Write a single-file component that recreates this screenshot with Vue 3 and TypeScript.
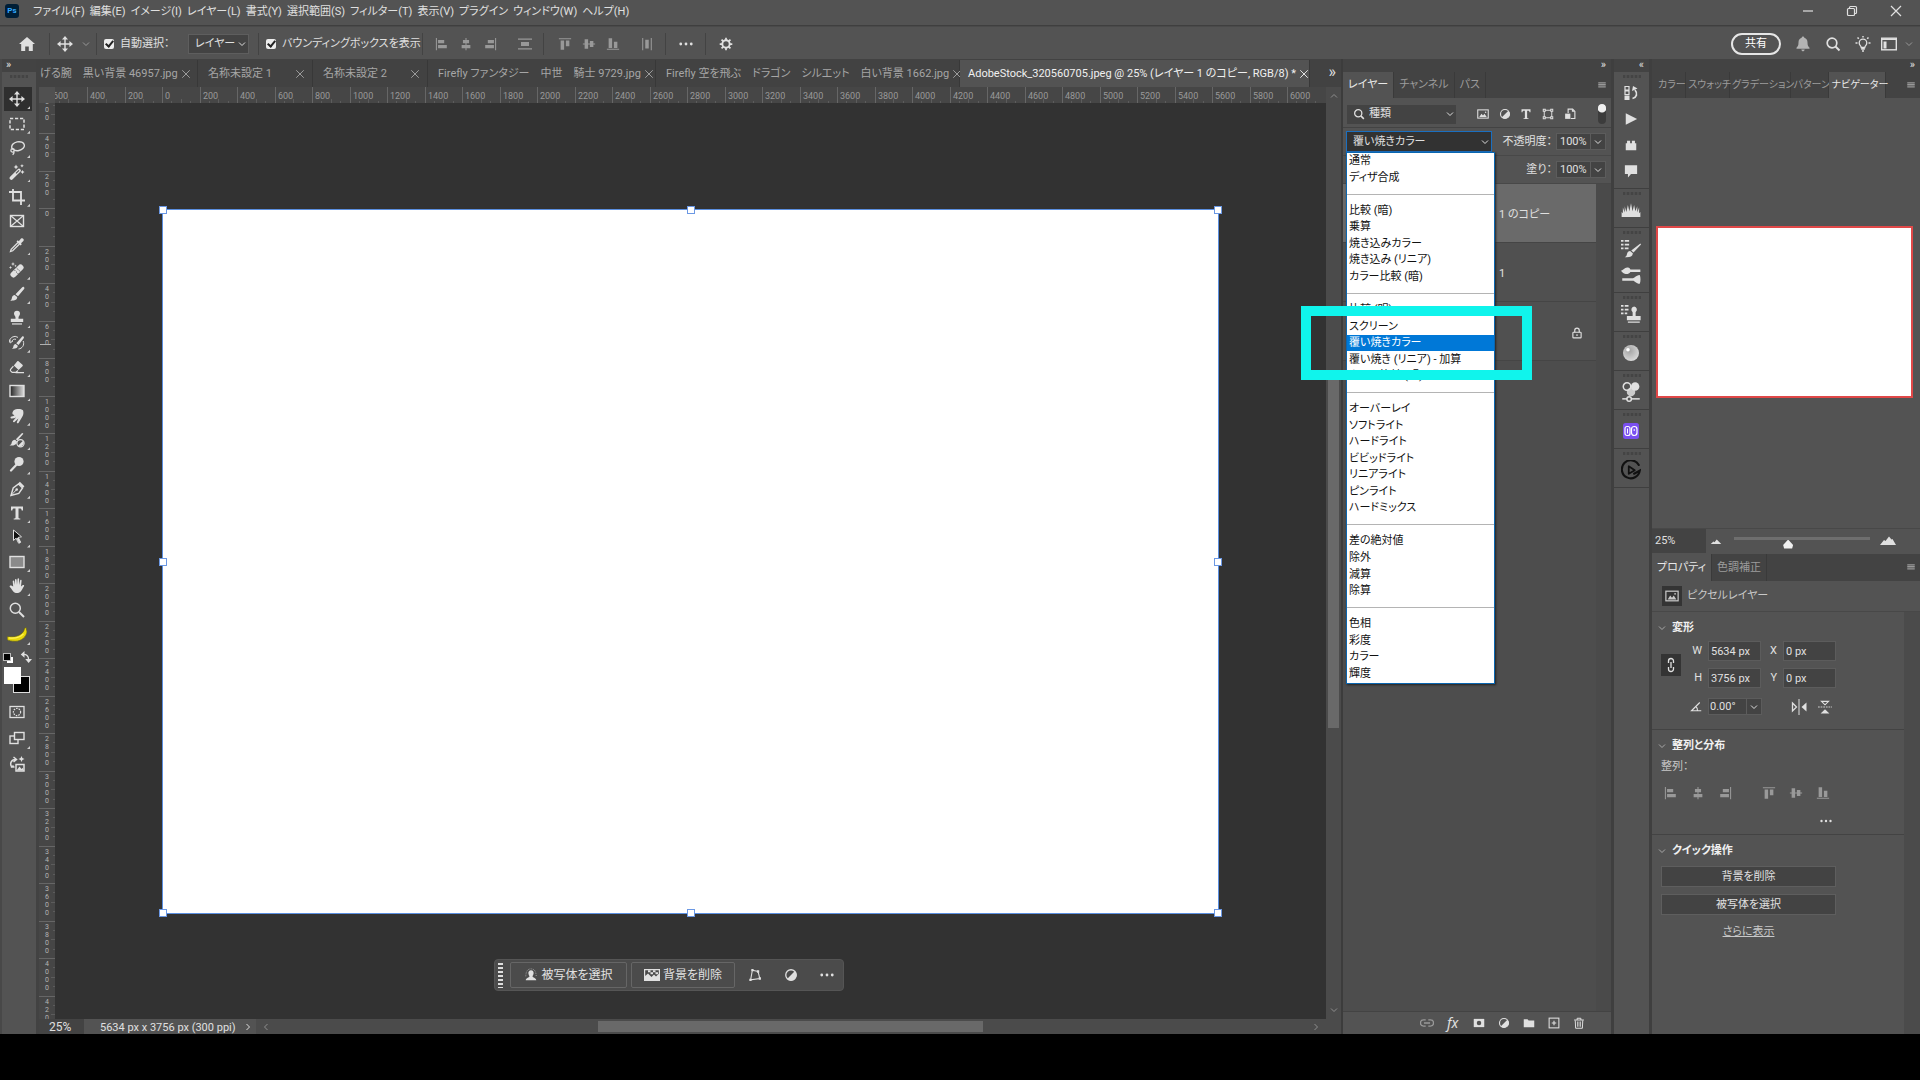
<script setup lang="ts">
import { ref } from 'vue'

const S = 'fill="none" stroke="currentColor"'

const icons: Record<string, string> = {
  move: `<path d="M8 2v12M2 8h12" ${S} stroke-width="1.4"/><path d="M8 0l3 3.6H5zM8 16l3-3.6H5zM0 8l3.6-3v6zM16 8l-3.6-3v6z"/>`,
  marquee: `<rect x="1" y="2.5" width="14" height="11" ${S} stroke-width="1.5" stroke-dasharray="3.2 1.8"/>`,
  lasso: `<ellipse cx="9" cy="6.2" rx="6.4" ry="4.4" ${S} stroke-width="1.4" transform="rotate(-12 9 6)"/><circle cx="3.6" cy="10.4" r="1.7" ${S} stroke-width="1.2"/><path d="M4.6 11.5c.8 1.2 0 2.4-1 3.2" ${S} stroke-width="1.2"/>`,
  wand: `<path d="M2.4 14L10 6.4" stroke="currentColor" stroke-width="3.6" stroke-linecap="round"/><path d="M7 9.400L10 6.400" stroke="#535353" stroke-width="1.300"/><path d="M7 .6l.8 1.600 1.600.8-1.600.8L7 5.400l-.8-1.600L4.600 3l1.600-.8zM13 0l.6 1.200 1.200.6-1.200.6L13 3.600l-.6-1.200-1.200-.6 1.200-.6zM13.500 6l.7 1.300 1.300.7-1.300.7-.7 1.300-.7-1.300-1.300-.7 1.300-.7z"/>`,
  crop: `<path d="M4 0v11.500h8M0 3h12v8.500M12 11.500V16M12.500 11.500H16" ${S} stroke-width="1.800"/>`,
  frame: `<rect x="1.500" y="2.500" width="13" height="11" ${S} stroke-width="1.400"/><path d="M1.500 2.500l13 11M14.500 2.500l-13 11" ${S} stroke-width="1.200"/>`,
  dropper: `<path d="M9 5.500L2.200 12.300 1.500 14.500l2.200-.7L10.500 7" ${S} stroke-width="1.300"/><path d="M7.500 4.500l1.300-1.200 1 .9L12 1.600c1.500-1.400 3.700.7 2.400 2.300L12 6.300l.8 1-1.300 1.200z"/>`,
  heal: `<path d="M4.500 12.500l7-7" stroke="currentColor" stroke-width="6" stroke-linecap="round"/><path d="M5.600 8.200l3.600 3.600M7.700 6.100l3.600 3.600" stroke="#535353" stroke-width="1" stroke-dasharray="1.200 .8"/><path d="M4 0l.6 1.400L6 2l-1.400.6L4 4l-.6-1.400L2 2l1.400-.6zM1.500 4l.5 1 1 .5-1 .5-.5 1L1 6l-1-.5L1 5zM6.500 2.500l.4 1 1 .4-1 .4-.4 1-.4-1-1-.4 1-.4z"/>`,
  brush: `<path d="M15 1.200c.8.700.4 1.500-.1 2.100L9 10.200 6.500 8.200 13 1.500c.600-.6 1.300-.9 2-.3zM5.700 9l2.500 2.100c.1 2.500-2 3.900-7.200 3.600 1.600-.8 1.600-1.600 1.900-3C3.300 10 4.400 9 5.700 9z"/>`,
  stamp: `<path d="M8 .8a3 3 0 0 1 3 3c0 1.600-1.500 2.200-1.500 3.700v1.300h4.700V12H1.800V8.800h4.700V7.500C6.500 6 5 5.400 5 3.800a3 3 0 0 1 3-3z"/><path d="M3 13.200h10v1.500H3z" opacity=".8"/>`,
  history: `<path d="M14.500 1.500c.8.700.4 1.300 0 1.900L9.500 10 7.300 8.200 13 1.700c.500-.5 1-.6 1.500-.2zM6.600 8.900l2.200 1.900c0 2.200-1.800 3.200-6 3 1.300-.8 1.400-1.300 1.600-2.500.2-1.500 1.100-2.400 2.200-2.400z"/><path d="M1 7a5 4.500 0 0 1 8-4.600M3 6.500a3 2.500 0 0 1 4-2.200M0 4.500L1.200 8 4 5.800M14.200 6c1.600 4-1 7.600-4.700 8" ${S}/>`,
  eraser: `<path d="M9.500 2.200l4 3.600c.5.500.5 1 0 1.500L9.600 11 4.800 6.600l3.500-4.300c.4-.4.800-.4 1.200-.1z"/><path d="M4.400 7.200L1.600 10.400c-.4.500-.4 1 0 1.500l1.600 1.500h3.500L9 11.500M6.500 13.700H15" ${S} stroke-width="1.200"/>`,
  gradient: `<defs><linearGradient id="tool-gradient"><stop offset="0" stop-color="#222"/><stop offset="1" stop-color="#ddd"/></linearGradient></defs><rect x="1" y="2.500" width="14" height="11" fill="url(#tool-gradient)" stroke="currentColor" stroke-width="1.400"/>`,
  smudge: `<path d="M4.500 2.500C7 .8 11.500.5 14 2.200c.8 2.300.6 5-1.300 7.500L9.500 15c-.8.700-2 .200-1.600-1l1.500-3.600L5.500 14c-1 .6-2-.3-1.300-1.300L7 9.500c-1 .5-2.500 1-4.500.9-1.300-.2-1.400-1.800 0-2 1.600-.2 2.500-.7 3-1.500-2 .2-3-1.800-1-4.400z"/>`,
  mixer: `<path d="M13.500 1l.9.700L8.500 8.600 6.800 7.200 12.800 1.200zM6.200 7.800L8 9.400c0 2.600-2.300 4.400-7.500 4.200 1.800-1 1.900-1.600 2.200-3C3 9 4.800 7.600 6.200 7.800z"/><circle cx="11.500" cy="11.300" r="3.600" ${S} stroke-width="1.200"/><path d="M14 8.800a3.600 3.600 0 0 1-5 5z"/>`,
  dodge: `<circle cx="10" cy="5.500" r="4.600"/><path d="M7.200 9L2 14.500" stroke="currentColor" stroke-width="2.200" stroke-linecap="round"/>`,
  pen: `<path d="M2 14.500L4.200 7 9.500 3l4 4-3.700 5.500z" ${S} stroke-width="1.400"/><path d="M2 14.500L7.200 9" ${S}/><circle cx="7.700" cy="8.500" r="1.300"/><path d="M9.300 2.300l1.600-1.500 4.500 4.500-1.500 1.600z"/>`,
  type: `<path d="M2 1.500h12v4h-1.300c-.2-1.500-.7-2-2-2H9.500v9c0 .800.4 1.100 1.800 1.100v1H4.700v-1c1.400 0 1.800-.3 1.800-1.100v-9H5.300c-1.300 0-1.800.5-2 2H2z"/>`,
  arrow: `<path d="M4.500 1v10.500l2.600-2.300 2.500 5 2-1-2.400-4.800 3.300-.6z" fill="#111" stroke="currentColor" stroke-width="1"/><path d="M8.500 9l2.500 5" stroke="currentColor" stroke-width="2"/>`,
  rect: `<rect x="1" y="2.500" width="14" height="11" fill="#8a8a8a" stroke="currentColor" stroke-width="1.400"/>`,
  hand: `<path d="M4.200 8.500L3.700 3.300c0-1 1.300-1.200 1.500-.2L6 7V1.700c0-1 1.500-1 1.600 0L8 6.800 8.500 1c.1-1 1.500-1 1.600 0v6l1-4.600c.3-.9 1.600-.6 1.500.3L12 8.500l1.500-1.300c1-.7 2.200.1 1.500 1-1.500 1.800-2 4-3.500 5.600-1.700 1.600-5.500 1.600-7 0C3 12 2.300 10.300.8 9 .2 8 1.200 7.200 2.300 7.600z"/>`,
  zoom: `<circle cx="6.300" cy="6.300" r="5" ${S} stroke-width="1.500"/><path d="M10 10l5 5" stroke="currentColor" stroke-width="2"/>`,
  search: `<circle cx="7" cy="7" r="4.800" ${S} stroke-width="1.700"/><path d="M10.500 10.500l4 4" stroke="currentColor" stroke-width="2"/>`,
  banana: `<path d="M14 2.500l1.300-.5.7 3.500c-.5 4-4.500 7.500-9.500 7.500-3 0-5-.5-6.300-1.300V9.200c4.500.5 9 0 11.800-2.700C13.500 5.200 13.800 4 14 2.500z" fill="#e8d80a" stroke="#5c5a20" stroke-width=".5"/><path d="M1.500 10.300c4.500.6 9-.3 11.700-3.200" fill="none" stroke="#fff25a"/>`,
  mask: `<rect x="1" y="2.500" width="14" height="11" ${S} stroke-width="1.300"/><circle cx="8" cy="8" r="3.600" ${S} stroke-width="1.200" stroke-dasharray="1.600 1"/>`,
  screens: `<rect x="1" y="6" width="8" height="7.500" ${S} stroke-width="1.400"/><rect x="5.500" y="2.500" width="9.500" height="7" fill="#535353" stroke="currentColor" stroke-width="1.400"/>`,
  generate: `<path d="M5.500 11H2.800C.5 8 2 3.500 6.500 3.500M4.500 1l3 2.400-3 2.600M2 11.500l2.500-2M7 8.500h8v6.500H7z" ${S} stroke-width="1.500"/><path d="M12.500 0l.9 2.100 2.100.9-2.100.9-.9 2.100-.9-2.100L9.500 3l2.100-.9zM7.500 14.500l3-4 2 2.500 1-1.200 1.500 2.700z"/>`,
  home: `<path d="M8 1l8 7h-2.200v7H9.800v-4.500H6.200V15H2.200V8H0z"/>`,
  chevron: `<path d="M4 6l4 4 4-4" ${S} stroke-width="1.300"/>`,
  gear: `<circle cx="8" cy="8" r="4.200" ${S} stroke-width="2.200"/><path d="M8 .8v3M8 12.200v3M.8 8h3M12.200 8h3M2.900 2.900L5 5M11 11l2.100 2.100M13.100 2.900L11 5M5 11l-2.100 2.100" stroke="currentColor" stroke-width="2"/>`,
  dots: `<circle cx="2" cy="8" r="1.600"/><circle cx="8" cy="8" r="1.600"/><circle cx="14" cy="8" r="1.600"/>`,
  alLeft: `<path d="M1 1h1.200v14H1zM3.500 3.500h7v3.500h-7zM3.500 9h10v3.800h-10z"/>`,
  alCenter: `<path d="M7.400 1h1.200v14H7.400zM4.500 3.500h7v3.500h-7zM3 9h10v3.800H3z"/>`,
  alRight: `<path d="M13.800 1H15v14h-1.200zM5.500 3.500h7v3.500h-7zM2.500 9h10v3.800h-10z"/>`,
  distV: `<path d="M1 2.500h14v1.200H1zM4 6h8v4H4zM1 12.300h14v1.200H1z"/>`,
  alTop: `<path d="M1 1.500h14v1.200H1zM3 4h4v10.500H3zM9 4h4v6.500H9z"/>`,
  alMid: `<path d="M1 7.400h14v1.200H1zM3 2.500h4v11H3zM9 4.500h4v7H9z"/>`,
  alBottom: `<path d="M1 13.500h14v1.200H1zM3 1.500h4v11H3zM9 5.500h4v7H9z"/>`,
  distH: `<path d="M2.500 1h1.200v14H2.500zM6 3h4v10H6zM12.300 1h1.200v14h-1.200z"/>`,
  bell: `<path d="M8 .5c.8 0 1.300.6 1.300 1.300 2.200.6 3.200 2.400 3.200 4.700 0 3 .7 4 2 5.200v1h-13v-1c1.300-1.200 2-2.200 2-5.200 0-2.300 1-4.100 3.200-4.700C6.700 1.100 7.200.5 8 .5zM6.300 13.500h3.400c-.3 2.400-3.100 2.400-3.400 0z"/>`,
  bulb: `<path d="M6.200 11.500c0-1.500-2-2.300-2-4.600a3.800 3.800 0 0 1 7.600 0c0 2.300-2 3.100-2 4.600zM6.200 13h3.600M7 15h2" ${S} stroke-width="1.300"/><path d="M8 0v1.600M.5 7h2M13.500 7h2M2.500 1.500l1.300 1.300M13.500 1.500l-1.300 1.300" ${S} stroke-width="1.500"/>`,
  workspace: `<rect x=".7" y="2.200" width="14.600" height="11.600" ${S} stroke-width="1.400"/><path d="M1 2.500h14v1.500H1zM2.500 5.500h3v7h-3z"/>`,
  min: `<path d="M3 8h10" ${S} stroke-width="1.200"/>`,
  restore: `<rect x="3.500" y="5.500" width="7" height="7" rx="1" ${S} stroke-width="1.200"/><path d="M5.500 5.500v-1c0-.6.4-1 1-1h5c.6 0 1 .4 1 1v5c0 .600-.4 1-1 1h-1" ${S} stroke-width="1.200"/>`,
  close: `<path d="M3 3l10 10M13 3L3 13" ${S} stroke-width="1.200"/>`,
  menu: `<path d="M2 3.500h12v2H2zM2 6.500h12v1.700H2zM2 9.200h12v1.700H2zM2 11.900h12v1H2z"/>`,
  picture: `<rect x="1" y="2.500" width="14" height="11" ${S} stroke-width="1.400"/><path d="M3 12l3-4.500L8 10l2-2.500L13 12z"/><circle cx="11.500" cy="5.500" r="1"/>`,
  adjust: `<circle cx="8" cy="8" r="6" ${S} stroke-width="1.500"/><path d="M12.500 3.500a6.300 6.300 0 0 1-9 9z"/>`,
  shape: `<path d="M3 3h10v10H3z" ${S} stroke-width="1.300"/><path d="M1 1h4v4H1zM11 1h4v4h-4zM1 11h4v4H1zM11 11h4v4h-4z"/><path d="M2.300 2.300h1.400v1.400H2.300zM12.300 2.300h1.400v1.400h-1.400zM2.300 12.300h1.400v1.400H2.300zM12.300 12.300h1.400v1.400h-1.400z" fill="#535353"/>`,
  smart: `<path d="M5.500 6.500v-5h6l3 3V14H9" ${S} stroke-width="1.500"/><path d="M1.500 7.500h7v7h-7z"/><path d="M10.500 1v4h4z"/>`,
  lock: `<rect x="2.500" y="7" width="11" height="7.500" rx="1" ${S} stroke-width="1.500"/><path d="M5 7V4.500a3 3 0 0 1 6 0V7M8 9.500v2.500" ${S} stroke-width="1.600"/>`,
  link: `<path d="M6.500 4.500H4a3.500 3.500 0 0 0 0 7h2.500M9.500 4.500H12a3.500 3.500 0 0 1 0 7H9.500M4.500 8h7" ${S} stroke-width="1.500"/>`,
  chain: `<path d="M5.500 6V4a2.500 2.500 0 0 1 5 0v2M5.500 10v2a2.500 2.500 0 0 0 5 0v-2M8 5v6" ${S} stroke-width="1.300"/>`,
  maskFill: `<path d="M1 2.500h14v11H1z"/><circle cx="8" cy="8" r="3" fill="#535353"/>`,
  folder: `<path d="M1 3h5l1.500 1.500H15v9H1z"/>`,
  plus: `<rect x="1.500" y="1.500" width="13" height="13" ${S} stroke-width="1.400"/><path d="M8 5v6M5 8h6" ${S} stroke-width="1.500"/>`,
  trash: `<path d="M1.500 4h13M5.500 4V1.700h5V4M3 4.500l.5 10.500h9L13 4.500" ${S} stroke-width="1.300"/><path d="M5.500 6h1v7h-1zM7.500 6h1v7h-1zM9.500 6h1v7h-1z"/>`,
  dHistory: `<path d="M2 1.500h4v3.500H2zM2 6h4v3.500H2z" ${S} stroke-width="1.200"/><path d="M1.500 10.500H6.500V15H1.500z"/><path d="M9.500 13.500c4-1 5.500-5 2.500-8.500" ${S} stroke-width="1.800"/><path d="M9 6l1-5 4.500 2.500z"/>`,
  play: `<path d="M2 1.500l13 6.500-13 6.500z"/>`,
  brick: `<path d="M2 6h1.500V3h3.500v3h2V3h3.500v3H14v8H2z"/>`,
  comment: `<path d="M1 1.500h14v10H8l-3.500 4v-4H1z"/>`,
  histogram: `<path d="M.5 13.500V9.500l1 1V6l1.500 4V5l1.300 4.500L5.500 4l1.200 5L8 2.500 9.200 9l1.300-5 1 5 1.500-4v5l1.500-4v4.500l1-1v4z"/>`,
  brushList: `<path d="M0 1.500h2M0 4.500h2M0 7.500h2M3 1.500h3.500M3 4.500h3.500M3 7.500h3" ${S} stroke-width="1.300"/><path d="M15.500 3.500l.5.900-6 6.300-1.800-1.600zM7.500 9.700l2 1.700c-.2 2.500-2 3.400-6.500 3.100 1.500-.7 1.500-1.300 1.800-2.500.3-1.300 1.300-2.400 2.700-2.300z"/>`,
  brushes: `<path d="M0 4.500C2 4 3 1.500 5.500 2c1.500.3 1.500 1 2 1.500h8v2h-8C6.500 7 5 7.500 3 7c-1.500-.4-2-1.600-3-2.500zM1 10.500h8.500c1.500 0 2-2 5.500-2.500.8 2 .8 5 0 7-3-.3-4-2.500-5.500-2.500H1z"/>`,
  stampList: `<path d="M0 1.500h2M0 4.500h2M0 7.500h2M3 1.500h3M3 4.500h3M3 7.500h2" ${S} stroke-width="1.300"/><path d="M10.500 2a2.500 2.500 0 0 1 1.200 4.500v3h4V13h-11V9.500h4.600v-3A2.500 2.500 0 0 1 10.500 2zM5.500 14h9.500v1H5.500z"/>`,
  sphere: `<defs><radialGradient id="dock-sphere" cx=".4" cy=".35" r=".7"><stop offset="0" stop-color="#a4a4a4"/><stop offset="1" stop-color="#dcdcdc"/></radialGradient></defs><circle cx="8" cy="8" r="8" fill="url(#dock-sphere)"/><circle cx="5" cy="4.800" r="1.800" fill="#fff"/>`,
  bubbles: `<circle cx="4.800" cy="3.600" r="3" ${S} stroke-width="1.200"/><circle cx="11.300" cy="3.600" r="3.400"/><circle cx="8" cy="8" r="3.400" opacity=".85"/><path d="M1 13.500h14" ${S} stroke-width="1.200"/><circle cx="6.500" cy="13.500" r="1.800" fill="#535353" stroke="currentColor" stroke-width="1.200"/>`,
  purple: `<rect width="16" height="16" rx="2.500" fill="#7a4ff0"/><rect x="2" y="3.500" width="5" height="9" rx="2" fill="none" stroke="#fff" stroke-width="1.200"/><rect x="8.500" y="3.500" width="5.500" height="9" rx="2.700" fill="none" stroke="#fff" stroke-width="1.200"/><path d="M4.500 5.500v5M11.200 6v2" stroke="#fff"/>`,
  elgato: `<path d="M14.200 4A7.200 7.200 0 1 0 15 8.500L10.500 11" fill="none" stroke="#111" stroke-width="1.700" stroke-linecap="round"/><path d="M6.200 5v6l4.800-2.800z" fill="none" stroke="#111" stroke-width="1.400" stroke-linejoin="round"/>`,
  person: `<path d="M8 2.500c2 0 3 1.500 3 3.300S10 9 9.700 9.500c0 1.500 4 1.500 4.300 4.500H2c.3-3 4.300-3 4.300-4.500C6 9 5 7.500 5 5.800S6 2.500 8 2.500z"/><path d="M2 9.500c.3-5 1.500-8.500 6-8.500s5.700 3.500 6 8.500" ${S} stroke-dasharray="1 1" opacity=".6"/>`,
  removeBg: `<path d="M0 2h16v12H0z"/><path d="M1.200 3.200h13.600v3.600L12 9.500 10 7.500 7.500 10 4 6.500 1.200 9z" fill="#484848"/><path d="M4 3.200h2.500v2H4zM9 3.200h2.500v2H9zM11.500 5.200H14v2h-2.500zM6.500 5.200H9v2H6.500z"/>`,
  warp: `<path d="M5 2.500l6.500 1.500L13.500 12 3 13.500z" ${S} stroke-width="1.200"/><path d="M3.800 1h2.600v2.600H3.800zM10.200 2.700h2.600v2.600h-2.600zM12.200 10.700h2.600v2.600h-2.600zM1.500 12.200h2.600v2.600H1.500z"/>`,
  angle: `<path d="M13 2L2 13h13M8 7.500c1.500 1.500 2 3 2 5" ${S} stroke-width="1.500"/>`,
  flipH: `<path d="M8 0v16" ${S}/><path d="M1.500 4l4 4-4 4z" ${S} stroke-width="1.300"/><path d="M15.500 3.500v9L10.500 8z"/>`,
  flipV: `<path d="M0 8h16" ${S} stroke-dasharray="2 1"/><path d="M4 1.500h8l-4 4z" ${S} stroke-width="1.300"/><path d="M3 15.500h10L8 10.500z"/>`,
  hillSmall: `<path d="M1 12l3.500-3.500L6 9.500 9 6l6 6z"/>`,
  hillLarge: `<path d="M0 12l4-5 1.500 1L9 3.500l2.500 3 1-.5L16 12z"/>`,
  swap: `<path d="M4 4.500c4.500-.5 7.500 2 7.500 7" ${S} stroke-width="1.800"/><path d="M6 0v9L1 4.500zM7 10.500h9L11.500 16z"/>`,
}

const menus = ['ファイル(F)', '編集(E)', 'イメージ(I)', 'レイヤー(L)', '書式(Y)', '選択範囲(S)', 'フィルター(T)', '表示(V)', 'プラグイン', 'ウィンドウ(W)', 'ヘルプ(H)']

const docs = [
  'げる腕　黒い背景 46957.jpg',
  '名称未設定 1',
  '名称未設定 2',
  'Firefly ファンタジー　中世　騎士 9729.jpg',
  'Firefly 空を飛ぶ　ドラゴン　シルエット　白い背景 1662.jpg',
  'AdobeStock_320560705.jpeg @ 25% (レイヤー 1 のコピー, RGB/8) *',
]

const tools = ['move', 'marquee', 'lasso', 'wand', 'crop', 'frame', 'dropper', 'heal', 'brush', 'stamp', 'history', 'eraser', 'gradient', 'smudge', 'mixer', 'dodge', 'pen', 'type', 'arrow', 'rect', 'hand', 'zoom', 'banana']
const single = ['frame', 'zoom']

const blendGroups = [
  ['通常', 'ディザ合成'],
  ['比較 (暗)', '乗算', '焼き込みカラー', '焼き込み (リニア)', 'カラー比較 (暗)'],
  ['比較 (明)', 'スクリーン', '覆い焼きカラー', '覆い焼き (リニア) - 加算', 'カラー比較 (明)'],
  ['オーバーレイ', 'ソフトライト', 'ハードライト', 'ビビッドライト', 'リニアライト', 'ピンライト', 'ハードミックス'],
  ['差の絶対値', '除外', '減算', '除算'],
  ['色相', '彩度', 'カラー', '輝度'],
]
const blend = ref('覆い焼きカラー')

const dock = [['dHistory', 'play', 'brick', 'comment'], ['histogram'], ['brushList', 'brushes'], ['stampList'], ['sphere'], ['bubbles'], ['purple'], ['elgato']]
const dockSize: Record<string, string> = { play: 'i14', brick: 'i14', comment: 'i14', dHistory: 'i16', sphere: 'i16', purple: 'i16' }

// One ruler division is 200 document pixels, drawn at 18.75 % of their size.
const SCALE = 0.1875
const at = (v: number) => Math.round(v * SCALE)
const marks = (from: number, to: number) => {
  const out: { pos: number; label: string; minor: number[] }[] = []
  for (let v = from; v <= to; v += 200) {
    out.push({ pos: at(v), label: String(Math.abs(v)), minor: [at(v + 50), at(v + 100), at(v + 150)] })
  }
  return out
}
const hMarks = marks(-600, 6000)
const vMarks = marks(-600, 4200)
const handles = ['tl', 'tc', 'tr', 'ml', 'mr', 'bl', 'bc', 'br']
const zoomLevel = ref(39)
const autoSelect = ref(true)
const showBox = ref(true)
</script>

<template>
  <div class="app">
    <header class="titlebar">
      <span class="ps">Ps</span>
      <nav class="menus">
        <button v-for="m in menus" :key="m" type="button">{{ m }}</button>
      </nav>
      <div class="window">
        <button v-for="w in ['min', 'restore', 'close']" :key="w" type="button" :aria-label="w"><svg class="i16" viewBox="0 0 16 16" v-html="icons[w]" /></button>
      </div>
    </header>

    <div class="options">
      <button class="cell home" type="button" aria-label="ホーム"><svg class="i16" viewBox="0 0 16 16" v-html="icons.home" /></button>
      <button class="cell current" type="button" aria-label="移動ツール">
        <svg class="i16" viewBox="0 0 16 16" v-html="icons.move" /><svg class="i12 dim" viewBox="0 0 16 16" v-html="icons.chevron" />
      </button>
      <div class="cell auto">
        <label><input v-model="autoSelect" type="checkbox">自動選択：</label>
        <span class="drop target">
          <select aria-label="自動選択の対象"><option>レイヤー</option></select>
          <svg class="i12" viewBox="0 0 16 16" v-html="icons.chevron" />
        </span>
      </div>
      <div class="cell box"><label><input v-model="showBox" type="checkbox">バウンディングボックスを表示</label></div>
      <div class="cell aligns">
        <button v-for="a in ['alLeft', 'alCenter', 'alRight']" :key="a" type="button" :aria-label="a"><svg class="i14" viewBox="0 0 16 16" v-html="icons[a]" /></button>
        <button class="apart" type="button" aria-label="distribute"><svg class="i16" viewBox="0 0 16 16" v-html="icons.distV" /></button>
      </div>
      <div class="cell aligns tops">
        <button v-for="a in ['alTop', 'alMid', 'alBottom']" :key="a" type="button" :aria-label="a"><svg class="i14" viewBox="0 0 16 16" v-html="icons[a]" /></button>
        <button class="apart" type="button" aria-label="distribute"><svg class="i14" viewBox="0 0 16 16" v-html="icons.distH" /></button>
      </div>
      <button class="cell dots" type="button" aria-label="その他"><svg class="i14" viewBox="0 0 16 16" v-html="icons.dots" /></button>
      <button class="cell gear" type="button" aria-label="設定"><svg class="i14" viewBox="0 0 16 16" v-html="icons.gear" /></button>
      <div class="account">
        <button class="share" type="button">共有</button>
        <svg class="i16 bell" viewBox="0 0 16 16" v-html="icons.bell" />
        <svg class="i16" viewBox="0 0 16 16" v-html="icons.search" />
        <svg class="i16" viewBox="0 0 16 16" v-html="icons.bulb" />
        <span class="ws"><svg class="i16" viewBox="0 0 16 16" v-html="icons.workspace" /><svg class="i12 dim" viewBox="0 0 16 16" v-html="icons.chevron" /></span>
      </div>
    </div>

    <div class="workspace">
      <aside class="toolbar">
        <div class="strip start">»</div>
        <div class="grip wide" />
        <div class="tools">
          <button v-for="(t, i) in tools" :key="t" type="button" :aria-label="t" :class="{ on: i === 0, more: !single.includes(t) }">
            <svg :class="t === 'banana' ? 'i20' : 'i16'" viewBox="0 0 16 16" v-html="icons[t]" />
          </button>
        </div>
        <div class="reset"><span class="mini" /><svg class="i12" viewBox="0 0 16 16" v-html="icons.swap" /></div>
        <div class="colors"><span class="back" /><span class="fore" /></div>
        <div class="modes">
          <button type="button" aria-label="クイックマスク"><svg class="i16" viewBox="0 0 16 16" v-html="icons.mask" /></button>
          <button class="more" type="button" aria-label="スクリーンモード"><svg class="i16" viewBox="0 0 16 16" v-html="icons.screens" /></button>
          <button type="button" aria-label="生成"><svg class="i16" viewBox="0 0 16 16" v-html="icons.generate" /></button>
        </div>
      </aside>

      <main class="document">
        <div class="tabs">
          <div v-for="(d, i) in docs" :key="d" class="tab" :class="{ active: i === docs.length - 1 }">
            <span>{{ d }}</span><button type="button" aria-label="閉じる"><svg class="i12" viewBox="0 0 16 16" v-html="icons.close" /></button>
          </div>
          <div class="overflow">»</div>
        </div>
        <div class="stage">
          <div class="corner" />
          <svg class="hruler">
            <g transform="translate(107 0)">
              <g v-for="m in hMarks" :key="m.pos">
                <rect class="major" :x="m.pos" y="0" width="1" height="16" />
                <rect v-for="(n, k) in m.minor" :key="n" class="minor" :x="n" :y="k === 1 ? 12 : 14" width="1" height="4" />
                <text :x="m.pos + 3" y="12">{{ m.label }}</text>
              </g>
            </g>
          </svg>
          <svg class="vruler">
            <g transform="translate(0 105)">
              <g v-for="m in vMarks" :key="m.pos">
                <rect class="major" x="0" :y="m.pos" width="16" height="1" />
                <rect v-for="(n, k) in m.minor" :key="n" class="minor" :x="k === 1 ? 12 : 14" :y="n" width="4" height="1" />
                <text x="8" :y="m.pos + 2">{{ m.label }}</text>
              </g>
            </g>
            <rect class="cursor" x="1" y="241" width="11" height="1" />
          </svg>
          <div class="canvas">
            <div class="artboard"><i v-for="h in handles" :key="h" :class="h" /></div>
            <div class="taskbar">
              <span class="handle" />
              <button class="boxed" type="button"><svg class="i14" viewBox="0 0 16 16" v-html="icons.person" />被写体を選択</button>
              <button class="boxed" type="button"><svg class="i16" viewBox="0 0 16 16" v-html="icons.removeBg" />背景を削除</button>
              <button v-for="b in ['warp', 'adjust', 'dots']" :key="b" type="button" class="bare" :aria-label="b"><svg class="i14" viewBox="0 0 16 16" v-html="icons[b]" /></button>
            </div>
          </div>
          <div class="vscroll">
            <svg class="i12 up" viewBox="0 0 16 16" v-html="icons.chevron" />
            <span class="thumb" />
            <svg class="i12" viewBox="0 0 16 16" v-html="icons.chevron" />
          </div>
        </div>
        <div class="status">
          <span class="pct">25%</span>
          <span class="info">5634 px x 3756 px (300 ppi)<svg class="i12 right" viewBox="0 0 16 16" v-html="icons.chevron" /></span>
          <div class="hscroll">
            <svg class="i12 left" viewBox="0 0 16 16" v-html="icons.chevron" />
            <span class="thumb" />
            <svg class="i12 right" viewBox="0 0 16 16" v-html="icons.chevron" />
          </div>
        </div>
      </main>

      <section class="layers">
        <div class="strip">»</div>
        <div class="ptabs">
          <button class="active" type="button">レイヤー</button><button type="button">チャンネル</button><button type="button">パス</button>
          <svg class="i12 pmenu" viewBox="0 0 16 16" v-html="icons.menu" />
        </div>
        <div class="filter">
          <span class="drop kind">
            <svg class="i12 glass" viewBox="0 0 16 16" v-html="icons.search" />
            <select aria-label="フィルターの種類"><option>種類</option></select>
            <svg class="i12" viewBox="0 0 16 16" v-html="icons.chevron" />
          </span>
          <button v-for="f in ['picture', 'adjust', 'type', 'shape', 'smart']" :key="f" type="button" :aria-label="f"><svg class="i12" viewBox="0 0 16 16" v-html="icons[f]" /></button>
          <span class="toggle" />
        </div>
        <div class="lrow">
          <div class="blend">
            <span class="drop">
              <select v-model="blend" aria-label="描画モード"><option>{{ blend }}</option></select>
              <svg class="i12" viewBox="0 0 16 16" v-html="icons.chevron" />
            </span>
            <div class="list" role="listbox">
              <template v-for="(g, gi) in blendGroups" :key="gi">
                <hr v-if="gi">
                <div v-for="o in g" :key="o" role="option" :class="{ chosen: o === blend }" :aria-selected="o === blend" @click="blend = o">{{ o }}</div>
              </template>
            </div>
            <div class="highlight" />
          </div>
          <label for="opacity">不透明度：</label>
          <span class="field"><input id="opacity" value="100%"><button type="button" aria-label="不透明度"><svg class="i12" viewBox="0 0 16 16" v-html="icons.chevron" /></button></span>
        </div>
        <div class="lrow">
          <label for="fill">塗り：</label>
          <span class="field"><input id="fill" value="100%"><button type="button" aria-label="塗り"><svg class="i12" viewBox="0 0 16 16" v-html="icons.chevron" /></button></span>
        </div>
        <div class="stack">
          <div class="layer selected">1 のコピー</div>
          <div class="layer">1</div>
          <div class="layer base"><svg class="i12" viewBox="0 0 16 16" v-html="icons.lock" /></div>
        </div>
        <div class="lfoot">
          <svg class="i14 dim" viewBox="0 0 16 16" v-html="icons.link" />
          <span class="fx">fx</span>
          <svg v-for="f in ['maskFill', 'adjust', 'folder', 'plus', 'trash']" :key="f" class="i12" viewBox="0 0 16 16" v-html="icons[f]" />
        </div>
      </section>

      <aside class="dock">
        <div class="strip">«</div>
        <div v-for="(g, gi) in dock" :key="gi" class="group">
          <div class="grip" />
          <button v-for="d in g" :key="d" type="button" :aria-label="d"><svg :class="dockSize[d] ?? 'i20'" viewBox="0 0 16 16" v-html="icons[d]" /></button>
        </div>
      </aside>

      <section class="side">
        <div class="strip">»</div>
        <div class="ptabs tight">
          <button type="button">カラー</button><button type="button">スウォッチ</button><button type="button">グラデーション</button><button type="button">パターン</button><button class="active" type="button">ナビゲーター</button>
          <svg class="i12 pmenu" viewBox="0 0 16 16" v-html="icons.menu" />
        </div>
        <div class="navigator"><div class="preview" /></div>
        <div class="zoombar">
          <input class="zoomval" value="25%" aria-label="ズーム">
          <svg class="i12" viewBox="0 0 16 16" v-html="icons.hillSmall" />
          <input v-model="zoomLevel" class="range" type="range" min="0" max="100" aria-label="ズームスライダー">
          <svg class="i16" viewBox="0 0 16 16" v-html="icons.hillLarge" />
        </div>
        <div class="ptabs props">
          <button class="active" type="button">プロパティ</button><button type="button">色調補正</button>
          <svg class="i12 pmenu" viewBox="0 0 16 16" v-html="icons.menu" />
        </div>
        <div class="kindrow"><span class="tile"><svg class="i14" viewBox="0 0 16 16" v-html="icons.picture" /></span>ピクセルレイヤー</div>
        <div class="sections">
          <div class="section">
            <h3><svg class="i12" viewBox="0 0 16 16" v-html="icons.chevron" />変形</h3>
            <div class="transform">
              <button class="tile chain" type="button" aria-label="縦横比を固定"><svg class="i16" viewBox="0 0 16 16" v-html="icons.chain" /></button>
              <label for="tw">W</label><input id="tw" value="5634 px">
              <label for="tx">X</label><input id="tx" value="0 px">
              <label for="th">H</label><input id="th" value="3756 px">
              <label for="ty">Y</label><input id="ty" value="0 px">
            </div>
            <div class="rotate">
              <svg class="i12" viewBox="0 0 16 16" v-html="icons.angle" />
              <span class="field"><input value="0.00°" aria-label="角度"><button type="button" aria-label="角度を選択"><svg class="i12" viewBox="0 0 16 16" v-html="icons.chevron" /></button></span>
              <span class="flips"><svg class="i16" viewBox="0 0 16 16" v-html="icons.flipH" /><svg class="i14" viewBox="0 0 16 16" v-html="icons.flipV" /></span>
            </div>
          </div>
          <div class="section align">
            <h3><svg class="i12" viewBox="0 0 16 16" v-html="icons.chevron" />整列と分布</h3>
            <p>整列：</p>
            <div class="grid6">
              <button v-for="a in ['alLeft', 'alCenter', 'alRight']" :key="a" type="button" :aria-label="a"><svg class="i14" viewBox="0 0 16 16" v-html="icons[a]" /></button>
              <i />
              <button v-for="a in ['alTop', 'alMid', 'alBottom']" :key="a" type="button" :aria-label="a"><svg class="i14" viewBox="0 0 16 16" v-html="icons[a]" /></button>
            </div>
            <div class="etc"><svg class="i12" viewBox="0 0 16 16" v-html="icons.dots" /></div>
          </div>
          <div class="section quick">
            <h3><svg class="i12" viewBox="0 0 16 16" v-html="icons.chevron" />クイック操作</h3>
            <button type="button">背景を削除</button>
            <button type="button">被写体を選択</button>
            <a href="#">さらに表示</a>
          </div>
        </div>
      </section>
    </div>
    <footer class="letterbox" />
  </div>
</template>

<style>
body { background: #000; overflow: hidden; }
</style>

<style scoped>
.app {
  min-height: 100vh;
  display: flex;
  flex-direction: column;
  background: #3f3f3f;
  color: #e0e0e0;
  font: 11px/16px Roboto, "Noto Sans CJK JP", sans-serif;
  font-feature-settings: "palt";
  white-space: nowrap;
}
* { box-sizing: border-box; }
button, input, select { font: inherit; font-feature-settings: inherit; color: inherit; background: none; border: 0; padding: 0; margin: 0; border-radius: 0; appearance: none; outline: 0; min-width: 0; }
svg { display: block; flex: none; fill: currentColor; }
.i12 { width: 12px; height: 12px; }
.i14 { width: 14px; height: 14px; }
.i16 { width: 16px; height: 16px; }
.i20 { width: 20px; height: 20px; }
.dim { color: #999; }
.left { transform: rotate(90deg); }
.right { transform: rotate(-90deg); }
.up { transform: rotate(180deg); }

.titlebar { height: 25px; display: flex; align-items: center; background: #535353; padding: 0 16px 3px 5px; }
.ps { width: 14px; height: 14px; border-radius: 3px; background: #001e36; color: #31a8ff; font-size: 8px; line-height: 14px; font-weight: 700; text-align: center; margin-right: 14px; }
.menus { display: flex; gap: 5px; flex: 1; padding-top: 2px; }
.window { display: flex; gap: 28px; }

.options { height: 33px; margin-top: 1px; display: flex; align-items: center; background: #535353; border-top: 1px solid #4a4a4a; padding-top: 1px; }
.cell { height: 22px; display: flex; align-items: center; border-right: 1px solid #434343; }
.home { width: 50px; padding-left: 19px; }
.current { width: 47px; padding-left: 7px; gap: 7px; }
.auto { width: 162px; padding-left: 7px; justify-content: space-between; padding-right: 9px; }
.box { width: 164px; padding-left: 7px; }
.cell label { display: flex; align-items: center; gap: 6px; }
.cell input { width: 10px; height: 10px; background: #ececec; border-radius: 2px; display: grid; place-items: center; }
.cell input:checked::after { content: ""; width: 3px; height: 6px; border: solid #222; border-width: 0 2px 2px 0; transform: rotate(40deg); margin-top: -2px; }
.drop { display: flex; align-items: center; background: #434343; }
.drop select { flex: 1; }
.target { width: 61px; height: 20px; border: 1px solid #5e5e5e; padding: 0 0 0 6px; }
.aligns { width: 121px; padding-left: 12px; gap: 10px; color: #999; }
.aligns .apart { margin-left: 10px; }
.aligns.tops { width: 122px; padding-left: 14px; }
.dots { width: 40px; justify-content: center; }
.gear { border: 0; padding-left: 13px; }
.account { margin-left: auto; display: flex; align-items: center; gap: 14px; padding-right: 5px; }
.share { width: 50px; height: 22px; border: 2px solid #e6e6e6; border-radius: 11px; color: #fff; line-height: 16px; }
.bell { color: #b4b4b4; }
.ws { display: flex; align-items: center; gap: 6px; margin-left: -4px; }

.workspace { flex: 1; display: flex; }
.strip { height: 13px; background: #434343; text-align: right; padding-right: 5px; line-height: 12px; font-size: 11px; }
.strip.start { text-align: left; padding-left: 4px; }
.toolbar { width: 39px; background: #535353; border-right: 3px solid #424242; border-left: 2px solid #484848; display: flex; flex-direction: column; }
.grip { height: 8px; padding-top: 3px; }
.grip::before { content: ""; display: block; width: 18px; height: 3px; margin: auto; background: repeating-linear-gradient(90deg, #444 0 2px, #4e4e4e 2px 4px); }
.grip.wide { height: 15px; }
.tools { height: 560px; display: flex; flex-direction: column; padding-right: 4px; }
.tools button, .modes button { flex: 1; margin-left: 2px; display: grid; place-items: center; position: relative; padding-right: 2px; }
.tools .on { background: #2f2f2f; }
.more::after { content: ""; position: absolute; right: 2px; bottom: 2px; width: 3px; height: 3px; background: #ccc; clip-path: polygon(100% 0, 100% 100%, 0 100%); }
.reset { display: flex; justify-content: space-between; align-items: center; padding: 1px 4px 2px 1px; height: 20px; }
.mini { width: 8px; height: 8px; background: #000; border: 1px solid #bbb; box-shadow: 3px 3px 0 -1px #fff; }
.colors { height: 28px; position: relative; }
.colors span { position: absolute; width: 17px; height: 17px; }
.fore { left: 2px; top: 0; background: #fff; }
.back { left: 11px; top: 9px; background: #000; border: 1px solid #ddd; }
.modes { height: 82px; padding: 4px 4px 0 0; display: flex; flex-direction: column; }

.document { flex: 1; min-width: 0; display: flex; flex-direction: column; background: #424242; }
.tabs { height: 28px; display: grid; grid-template-columns: 159px 115px 115px 228px 304px 350px 1fr; padding-top: 1px; }
.tab { display: flex; align-items: center; justify-content: space-between; gap: 2px; border-right: 1px solid #383838; padding: 1px 6px 0 10px; color: #a6a6a6; min-width: 0; }
.tab:first-child { padding-left: 1px; }
.tab.active { background: #535353; color: #f0f0f0; padding: 1px 2px 0 8px; }
.overflow { font-size: 16px; text-align: right; padding-right: 5px; line-height: 24px; }
.stage { flex: 1; display: grid; grid-template: 16px 1fr / 16px 1fr 15px; }
.corner { background: #505050; }
.hruler, .vruler { background: #464646; overflow: hidden; font-size: 9px; width: 100%; height: 100%; }
.hruler text { fill: #999; }
.vruler { grid-area: 2 / 1; height: 916px; }
.vruler text { fill: #b4b4b4; font-size: 7px; writing-mode: vertical-rl; text-orientation: upright; }
.major { fill: #666; }
.minor { fill: #5c5c5c; }
.cursor { fill: #b0b0b0; }
.canvas { grid-area: 2 / 2; background: #323232; position: relative; }
.artboard { position: absolute; left: 107px; top: 106px; width: 1057px; height: 705px; background: #fff; border: 1px solid #5b8fe0; }
.artboard i { position: absolute; width: 8px; height: 8px; margin: -4px; background: #fff; border: 1px solid #6b98e4; }
.tl, .tc, .tr { top: 0; }
.ml, .mr { top: 50%; }
.bl, .bc, .br { top: 100%; }
.tl, .ml, .bl { left: 0; }
.tc, .bc { left: 50%; }
.tr, .mr, .br { left: 100%; }
.taskbar { position: absolute; left: 439px; top: 856px; height: 32px; width: 350px; background: #4b4b4b; border: 1px solid #555; border-radius: 4px; display: flex; align-items: center; gap: 4px; padding: 0 0 0 3px; font-size: 12px; }
.handle { width: 5px; height: 25px; margin-right: 3px; background: repeating-linear-gradient(#ddd 0 2px, #4b4b4b 2px 4px); }
.boxed { height: 26px; border: 1px solid #666; border-radius: 2px; display: flex; align-items: center; justify-content: center; gap: 3px; width: 117px; }
.boxed + .boxed { width: 104px; }
.bare { flex: 1; display: grid; place-items: center; }
.vscroll { grid-area: 1 / 3 / 3 / 4; background: #4b4b4b; display: flex; flex-direction: column; align-items: center; padding: 3px 0; color: #909090; }
.vscroll .thumb { width: 11px; height: 348px; background: #696969; margin: 278px 0 auto; }
.status { height: 15px; display: flex; align-items: center; background: #4b4b4b; line-height: 15px; }
.pct { width: 45px; padding: 1px 0 0 10px; height: 15px; background: #434343; font-size: 12px; }
.info { width: 172px; height: 15px; background: #535353; padding: 1px 2px 0 16px; display: flex; align-items: center; justify-content: space-between; }
.hscroll { flex: 1; display: flex; align-items: center; justify-content: space-between; padding: 0 19px 0 4px; color: #909090; }
.hscroll .thumb { width: 385px; height: 11px; background: #696969; margin: 0 auto 0 326px; }

.layers { width: 273px; border-left: 2px solid #3c3c3c; border-right: 3px solid #3f3f3f; background: #535353; display: flex; flex-direction: column; }
.ptabs { height: 26px; display: flex; background: #434343; color: #9c9c9c; }
.ptabs button { padding: 0 5px; border-right: 1px solid #3a3a3a; }
.ptabs .active { background: #535353; color: #e8e8e8; }
.pmenu { width: 10px; margin: 7px 4px 0 auto; color: #999; }
.tight { padding-left: 4px; }
.tight button { padding: 0 2px; font-size: 10px; }
.tight .active { margin-left: auto; }
.tight .pmenu { margin-left: 20px; }
.props { margin-top: 1px; height: 27px; }
.filter { height: 30px; display: flex; align-items: center; justify-content: space-between; padding: 3px 5px 0 4px; border-bottom: 1px solid #434343; }
.kind { width: 109px; height: 19px; padding: 0 0 0 6px; gap: 4px; margin-right: 11px; }
.toggle { width: 8px; height: 20px; border-radius: 4px; background: radial-gradient(circle at 4px 4px, #f0f0f0 0 4px, #3c3c3c 5px); margin-left: 12px; }
.lrow { height: 28px; border-bottom: 1px solid #484848; display: flex; align-items: center; justify-content: flex-end; padding-right: 5px; gap: 4px; }
.blend { position: relative; align-self: flex-end; margin-right: auto; margin-left: 3px; width: 146px; height: 22px; }
.blend .drop { height: 21px; margin-top: -2px; background: #323232; border: 1px solid #1b6fc0; padding: 1px 0 0 6px; }
.list { position: absolute; z-index: 1; left: 0; top: 19px; width: 149px; height: 532px; padding-bottom: 1px; background: #fff; color: #111; border: 1px solid #0a66b0; display: flex; flex-direction: column; box-shadow: 1px 1px 2px #222; }
.list div { flex: 1 1 0; display: flex; align-items: center; padding-left: 2px; line-height: 14px; min-height: 0; }
.list hr { flex: 1 1 0; margin: 0; border: 0; width: 100%; background: linear-gradient(#b4b4b4, #b4b4b4) center / 100% 1px no-repeat; }
.list .chosen { background: #0078d7; color: #fff; }
.highlight { position: absolute; z-index: 2; left: -45px; top: 173px; width: 231px; height: 74px; border: 10px solid #10f4ec; }
.field { display: flex; height: 17px; background: #434343; border: 1px solid #5c5c5c; }
.field input { width: 34px; padding-left: 3px; border-right: 1px solid #5c5c5c; }
.field button { width: 14px; display: grid; place-items: center; }
.stack { flex: 1; background: #4d4d4d; border-right: 15px solid #4a4a4a; }
.layer { height: 59px; display: flex; align-items: center; padding-left: 156px; padding-top: 3px; border-bottom: 1px solid #454545; background: #505050; }
.layer.selected { background: #6a6a6a; }
.layer.base { justify-content: flex-end; padding-right: 13px; }
.lfoot { height: 23px; border-top: 1px solid #434343; display: flex; align-items: center; justify-content: flex-end; gap: 13px; padding-right: 26px; }
.lfoot .fx { font: italic 14px/14px "Noto Sans", sans-serif; width: 13px; }

.dock { width: 38px; border-right: 3px solid #3f3f3f; background: #535353; }
.group { border-bottom: 1px solid #3f3f3f; padding-bottom: 4px; }
.group button { display: grid; place-items: center; width: 100%; height: 26px; padding-right: 1px; }

.side { width: 268px; background: #535353; display: flex; flex-direction: column; }
.navigator { height: 430px; padding: 128px 7px 0 4px; }
.preview { height: 172px; background: #fff; border: 2px solid #e04848; }
.zoombar { height: 25px; display: flex; align-items: center; border-top: 1px solid #484848; padding-right: 24px; }
.zoomval { width: 54px; height: 100%; background: #434343; padding: 0 0 2px 3px; margin-right: 4px; }
.range { flex: 1; height: 20px; margin: 0 10px 0 12px; }
.range::-webkit-slider-runnable-track { height: 3px; background: #6e6e6e; margin-top: -6px; }
.range::-webkit-slider-thumb { appearance: none; width: 10px; height: 9px; margin-top: 3px; background: #f0f0f0; clip-path: polygon(50% 0, 100% 60%, 90% 100%, 10% 100%, 0 60%); }
.kindrow { height: 31px; display: flex; align-items: center; gap: 5px; padding-left: 10px; border-bottom: 1px solid #484848; color: #c8c8c8; }
.tile { width: 20px; height: 20px; background: #343434; display: grid; place-items: center; }
.sections { flex: 1; border-right: 16px solid #4b4b4b; }
.section { border-bottom: 1px solid #434343; padding: 8px 0 0 4px; height: 118px; }
.section.align { height: 105px; }
.section.quick { border: 0; height: auto; }
h3 { margin: 0; font-size: 11px; line-height: 16px; color: #f0f0f0; display: flex; align-items: center; gap: 4px; }
h3 svg { color: #aaa; }
.transform { display: grid; grid-template-columns: 22px 25px 53px 22px 53px; grid-template-rows: 20px 20px; row-gap: 7px; margin: 5px 0 0 5px; align-items: center; }
.transform label { text-align: right; padding-right: 6px; }
.transform input { height: 20px; background: #434343; border: 1px solid #5c5c5c; padding-left: 2px; }
.chain { grid-row: 1 / 3; height: 22px; }
.rotate { display: flex; align-items: center; padding: 10px 0 0 34px; gap: 6px; }
.rotate .field input { width: 38px; padding-left: 1px; }
.flips { display: flex; gap: 11px; margin-left: 23px; align-items: center; }
p { margin: 5px 0 0 5px; color: #c8c8c8; }
.grid6 { display: flex; gap: 13px; padding: 11px 0 0 8px; color: #999; }
.grid6 i { width: 4px; }
.etc { padding: 15px 0 0 164px; }
.quick button { display: block; width: 175px; height: 21px; margin: 7px 0 0 5px; background: #434343; border: 1px solid #5e5e5e; line-height: 18px; }
.quick a { display: block; width: 175px; margin: 9px 0 0 5px; text-align: center; color: #c8c8c8; }
.letterbox { height: 46px; background: #000; }
</style>
